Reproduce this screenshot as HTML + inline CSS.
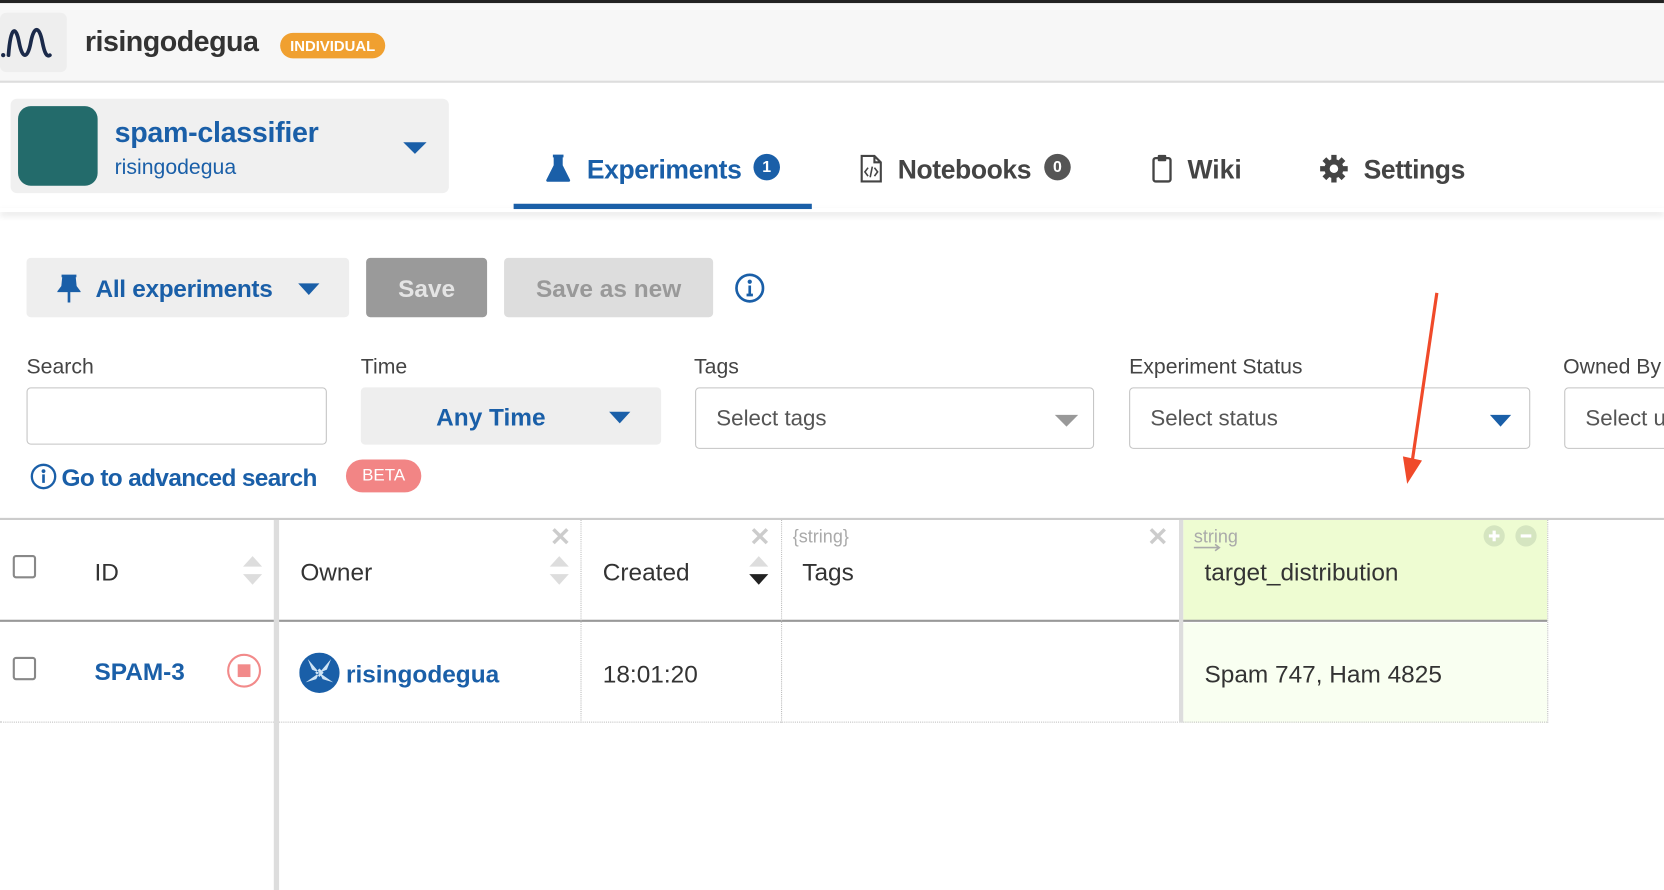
<!DOCTYPE html>
<html><head><meta charset="utf-8"><style>
html,body{margin:0;padding:0;width:1664px;height:890px;overflow:hidden;background:#fff;font-family:"Liberation Sans",sans-serif;}
#w{position:absolute;left:0;top:0;width:1568px;height:839px;transform:scale(1.0612);transform-origin:0 0;}
.a{position:absolute;white-space:nowrap;}
.blue{color:#1a5fa8}
.tri{position:absolute;width:0;height:0;border-left:10px solid transparent;border-right:10px solid transparent;border-top:11px solid #1a5fa8;}
.lbl{font-size:20px;color:#444;top:333px}
.box{position:absolute;box-sizing:border-box;border:1.5px solid #c4c4c4;border-radius:4px;background:#fff}
.sel{font-size:21px;color:#555}
.cb{position:absolute;width:22px;height:22px;border:2px solid #888;border-radius:3px;box-sizing:border-box}
.vd{position:absolute;border-left:1.5px dotted #bbb}
.x{position:absolute;color:#ccc;font-size:24px;font-weight:bold}
.sup{position:absolute;width:0;height:0;border-left:9px solid transparent;border-right:9px solid transparent;border-bottom:10px solid #ddd}
.sdn{position:absolute;width:0;height:0;border-left:9px solid transparent;border-right:9px solid transparent;border-top:10px solid #ddd}
</style></head><body><div id="w">
<div class="a" style="left:0;top:0;width:1568px;height:3px;background:#222"></div>
<div class="a" style="left:0;top:3px;width:1568px;height:73px;background:#f7f7f7;border-bottom:2px solid #ddd"></div>
<div class="a" style="left:0;top:12px;width:63px;height:56px;background:#eee;border-radius:6px"></div>
<svg class="a" style="left:0;top:22px" width="52" height="36" viewBox="0 0 52 36"><path d="M8 30 C10 2 15 2 18 18 C21 34 26 34 29 18 C32 2 37 2 40 18 C42 28 44 32 47 30" fill="none" stroke="#1b2a4a" stroke-width="3.5" stroke-linecap="round"/><circle cx="3" cy="30" r="2" fill="#1b2a4a"/></svg>
<div class="a" style="left:80px;top:24px;font-size:27px;font-weight:bold;color:#333;letter-spacing:-0.5px">risingodegua</div>
<div class="a" style="left:264px;top:31px;width:99px;height:24px;background:#f0a030;border-radius:12px;color:#fff;font-size:14px;font-weight:bold;text-align:center;line-height:24px">INDIVIDUAL</div>

<div class="a" style="left:10px;top:93px;width:413px;height:89px;background:#f0f0f0;border-radius:6px"></div>
<div class="a" style="left:17px;top:100px;width:75px;height:75px;background:#236b6b;border-radius:12px"></div>
<div class="a blue" style="left:108px;top:110px;font-size:27px;font-weight:bold;letter-spacing:-0.3px">spam-classifier</div>
<div class="a blue" style="left:108px;top:147px;font-size:20px">risingodegua</div>
<div class="tri" style="left:380px;top:134px;border-left-width:11px;border-right-width:11px"></div>
<div class="a" style="left:0;top:196px;width:1568px;height:4px;box-shadow:0 3px 6px rgba(0,0,0,.12)"></div>

<svg class="a" style="left:513px;top:145px" width="26" height="28" viewBox="0 0 26 28"><path d="M8 2h10M10 2v9L3 25h20L16 11V2" fill="#1a5fa8" stroke="#1a5fa8" stroke-width="2.5" stroke-linejoin="round"/></svg>
<div class="a blue" style="left:553px;top:146px;font-size:25px;font-weight:bold;letter-spacing:-0.4px">Experiments</div>
<div class="a" style="left:710px;top:145px;width:25px;height:25px;border-radius:50%;background:#1a5fa8;color:#fff;font-size:15px;font-weight:bold;text-align:center;line-height:25px">1</div>
<div class="a" style="left:484px;top:192px;width:281px;height:5px;background:#1a5fa8"></div>
<svg class="a" style="left:810px;top:145px" width="22" height="28" viewBox="0 0 22 28"><path d="M2 2h12l6 6v18H2z M14 2v6h6" fill="none" stroke="#444" stroke-width="2"/><path d="M8 13l-3 4 3 4M14 13l3 4-3 4M12 12l-2 10" fill="none" stroke="#444" stroke-width="1.5"/></svg>
<div class="a" style="left:846px;top:146px;font-size:25px;font-weight:bold;color:#444;letter-spacing:-0.4px">Notebooks</div>
<div class="a" style="left:984px;top:145px;width:25px;height:25px;border-radius:50%;background:#555;color:#fff;font-size:15px;font-weight:bold;text-align:center;line-height:25px">0</div>
<svg class="a" style="left:1085px;top:145px" width="20" height="28" viewBox="0 0 20 28"><rect x="2" y="4" width="16" height="22" rx="2" fill="none" stroke="#444" stroke-width="2.2"/><rect x="6" y="1" width="8" height="6" rx="1" fill="#444"/></svg>
<div class="a" style="left:1119px;top:146px;font-size:25px;font-weight:bold;color:#444">Wiki</div>
<svg class="a" style="left:1243px;top:145px" width="28" height="28" viewBox="0 0 28 28"><circle cx="14" cy="14" r="9" fill="#444"/><g stroke="#444" stroke-width="5"><path d="M14 1v26M1 14h26M5 5l18 18M23 5L5 23"/></g><circle cx="14" cy="14" r="4" fill="#fff"/></svg>
<div class="a" style="left:1285px;top:146px;font-size:25px;font-weight:bold;color:#444;letter-spacing:-0.4px">Settings</div>

<div class="a" style="left:25px;top:243px;width:304px;height:56px;background:#eee;border-radius:4px"></div>
<svg class="a" style="left:54px;top:258px" width="22" height="28" viewBox="0 0 22 28"><path d="M4 2h14M6 2l-1 10-3 4h18l-3-4-1-10M11 16v11" fill="#1a5fa8" stroke="#1a5fa8" stroke-width="2.5"/></svg>
<div class="a blue" style="left:90px;top:259px;font-size:23px;font-weight:bold;letter-spacing:-0.3px">All experiments</div>
<div class="tri" style="left:281px;top:267px"></div>
<div class="a" style="left:345px;top:243px;width:114px;height:56px;background:#9a9a9a;border-radius:4px;color:#e4e4e4;font-size:23px;font-weight:bold;text-align:center;line-height:58px">Save</div>
<div class="a" style="left:475px;top:243px;width:197px;height:56px;background:#ddd;border-radius:4px;color:#999;font-size:23px;font-weight:bold;text-align:center;line-height:58px">Save as new</div>
<svg class="a" style="left:692px;top:257px" width="29" height="29" viewBox="0 0 29 29"><circle cx="14.5" cy="14.5" r="12.5" fill="none" stroke="#1a5fa8" stroke-width="2.5"/><circle cx="14.5" cy="8.5" r="2" fill="#1a5fa8"/><path d="M14.5 12v9M11.5 21h6" stroke="#1a5fa8" stroke-width="2.5"/></svg>

<div class="a lbl" style="left:25px;top:335px">Search</div>
<div class="a lbl" style="left:340px;top:335px">Time</div>
<div class="a lbl" style="left:654px;top:335px">Tags</div>
<div class="a lbl" style="left:1064px;top:335px">Experiment Status</div>
<div class="a lbl" style="left:1473px;top:335px">Owned By</div>
<div class="box" style="left:25px;top:365px;width:283px;height:54px"></div>
<div class="a" style="left:340px;top:365px;width:283px;height:54px;background:#eee;border-radius:4px"></div>
<div class="a blue" style="left:411px;top:380px;font-size:23px;font-weight:bold">Any Time</div>
<div class="tri" style="left:574px;top:388px"></div>
<div class="box" style="left:655px;top:365px;width:376px;height:58px"></div>
<div class="a sel" style="left:675px;top:383px">Select tags</div>
<div class="tri" style="left:994px;top:391px;border-top-color:#999;border-left-width:11px;border-right-width:11px"></div>
<div class="box" style="left:1064px;top:365px;width:378px;height:58px"></div>
<div class="a sel" style="left:1084px;top:383px">Select status</div>
<div class="tri" style="left:1404px;top:391px"></div>
<div class="box" style="left:1474px;top:365px;width:120px;height:58px"></div>
<div class="a sel" style="left:1494px;top:383px">Select u</div>

<svg class="a" style="left:28px;top:436px" width="26" height="26" viewBox="0 0 26 26"><circle cx="13" cy="13" r="11" fill="none" stroke="#1a5fa8" stroke-width="2.2"/><circle cx="13" cy="8" r="1.8" fill="#1a5fa8"/><path d="M13 11v8" stroke="#1a5fa8" stroke-width="2.5"/></svg>
<div class="a blue" style="left:58px;top:437px;font-size:23px;font-weight:bold;letter-spacing:-0.6px">Go to advanced search</div>
<div class="a" style="left:326px;top:433px;width:71px;height:31px;background:#f28585;border-radius:16px;color:#fff;font-size:16px;text-align:center;line-height:31px">BETA</div>

<svg class="a" style="left:1310px;top:270px" width="60" height="190"><path d="M44 6L20 170" stroke="#f04a2a" stroke-width="3"/><path d="M12 160L16 186 30 164z" fill="#f04a2a"/></svg>

<div class="a" style="left:0;top:488px;width:1568px;height:2px;background:#ccc"></div>
<div class="a" style="left:1115px;top:490px;width:343px;height:95px;background:#eefcd2"></div>
<div class="a" style="left:1115px;top:587px;width:343px;height:94px;background:#f9fff1"></div>
<div class="a" style="left:0;top:584px;width:1458px;height:2px;background:#999"></div>
<div class="a" style="left:0;top:680px;width:1458px;border-top:1.5px dotted #bbb"></div>
<div class="a" style="left:258px;top:490px;width:5px;height:349px;background:#ddd"></div>
<div class="a" style="left:1111px;top:490px;width:4px;height:191px;background:#ddd"></div>
<div class="vd" style="left:547px;top:490px;height:191px"></div>
<div class="vd" style="left:736px;top:490px;height:191px"></div>
<div class="vd" style="left:1458px;top:490px;height:191px"></div>

<div class="cb" style="left:12px;top:523px"></div>
<div class="a" style="left:89px;top:526px;font-size:23px;color:#333">ID</div>
<div class="sup" style="left:229px;top:524px"></div><div class="sdn" style="left:229px;top:541px"></div>
<div class="a" style="left:283px;top:526px;font-size:23px;color:#333">Owner</div>
<div class="x" style="left:518px;top:492px">✕</div>
<div class="sup" style="left:518px;top:524px"></div><div class="sdn" style="left:518px;top:541px"></div>
<div class="a" style="left:568px;top:526px;font-size:23px;color:#333">Created</div>
<div class="x" style="left:706px;top:492px">✕</div>
<div class="sup" style="left:706px;top:524px"></div><div class="sdn" style="left:706px;top:541px;border-top-color:#222"></div>
<div class="a" style="left:747px;top:496px;font-size:17px;color:#aaa">{string}</div>
<div class="a" style="left:756px;top:526px;font-size:23px;color:#333">Tags</div>
<div class="x" style="left:1081px;top:492px">✕</div>
<div class="a" style="left:1125px;top:496px;font-size:17px;color:#aaa">string</div>
<svg class="a" style="left:1124px;top:512px" width="30" height="8"><path d="M1 4h24M21 1l4 3-4 3" stroke="#aaa" stroke-width="1.5" fill="none"/></svg>
<div class="a" style="left:1135px;top:526px;font-size:23px;color:#333">target_distribution</div>
<svg class="a" style="left:1397px;top:494px" width="54" height="22"><circle cx="11" cy="11" r="10" fill="#d5e5c0"/><path d="M11 6v10M6 11h10" stroke="#fff" stroke-width="3"/><circle cx="41" cy="11" r="10" fill="#d5e5c0"/><path d="M36 11h10" stroke="#fff" stroke-width="3"/></svg>

<div class="cb" style="left:12px;top:619px"></div>
<div class="a blue" style="left:89px;top:620px;font-size:23px;font-weight:bold">SPAM-3</div>
<svg class="a" style="left:213px;top:615px" width="34" height="34"><circle cx="17" cy="17" r="15" fill="none" stroke="#f28a8a" stroke-width="2"/><rect x="11" y="11" width="12" height="12" fill="#f28a8a"/></svg>
<svg class="a" style="left:282px;top:615px" width="38" height="38" viewBox="0 0 38 38"><circle cx="19" cy="19" r="19" fill="#1a5fa8"/><g fill="#cfe4f5"><path d="M19 19L8 6l4 10zM19 19L30 6l-4 10zM19 19L6 28l10-3zM19 19l13 9-10-3zM15 19l4-4 4 4-4 4z"/></g></svg>
<div class="a blue" style="left:326px;top:622px;font-size:23px;font-weight:bold">risingodegua</div>
<div class="a" style="left:568px;top:622px;font-size:23px;color:#333">18:01:20</div>
<div class="a" style="left:1135px;top:622px;font-size:23px;color:#333">Spam 747, Ham 4825</div>
</div></body></html>
